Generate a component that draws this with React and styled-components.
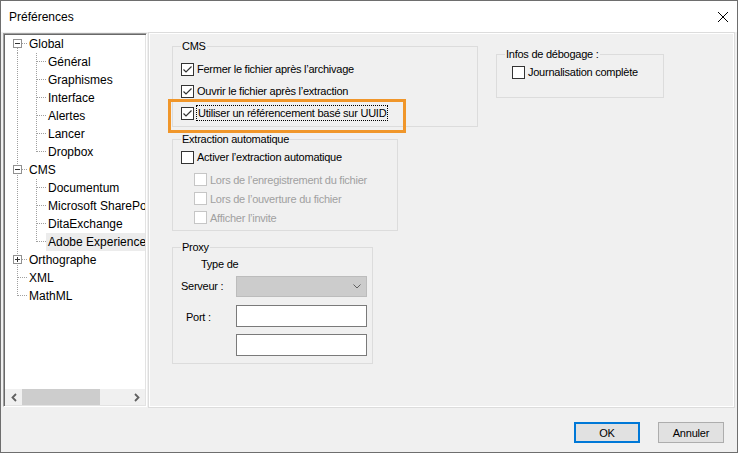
import styled, { createGlobalStyle } from 'styled-components';

const GlobalStyle = createGlobalStyle`
  html, body {
    margin: 0;
    padding: 0;
    background: #fff;
  }
  body {
    font-family: "Liberation Sans", Arial, sans-serif;
    color: #000;
  }
`;

const Window = styled.div`
  width: 738px;
  height: 453px;
  box-sizing: border-box;
  border: 1px solid #6e6e6e;
  display: flex;
  flex-direction: column;
  background: #f0f0f0;
`;

const TitleBar = styled.div`
  height: 31px;
  flex: none;
  background: #fff;
  display: flex;
  align-items: center;
  justify-content: space-between;
  padding: 0 9px 0 8px;
  font-size: 12px;
`;

const Body = styled.div`
  flex: 1;
  display: flex;
  flex-direction: column;
  padding: 1px 0 0 2px;
`;

const Main = styled.div`
  display: flex;
  gap: 2px;
  height: 374px;
`;

const Tree = styled.div`
  width: 144px;
  box-sizing: border-box;
  border-style: solid;
  border-width: 1px;
  border-color: #a0a0a0 #fff #fff #a0a0a0;
  box-shadow: inset 1px 1px 0 #696969, inset -1px -1px 0 #e3e3e3;
  background: #fff;
  display: flex;
  flex-direction: column;
  padding: 1px;
  overflow: hidden;
`;

const TreeList = styled.div`
  flex: 1;
  overflow: hidden;
`;

const TreeRow = styled.div`
  display: flex;
  align-items: center;
  height: 18px;
  white-space: nowrap;
  font-size: 12px;
`;

const TreeLabel = styled.span`
  padding: 2px 2px;
  line-height: 14px;
  flex: ${p => (p.$selected ? 1 : 'none')};
  background: ${p => (p.$selected ? '#ececec' : 'transparent')};
`;

const HScroll = styled.div`
  height: 16px;
  flex: none;
  display: flex;
  background: #f0f0f0;
`;

const ScrollArrow = styled.div`
  width: 17px;
  display: flex;
  align-items: center;
  justify-content: center;
`;

const Track = styled.div`
  flex: 1;
  display: flex;
`;

const Thumb = styled.div`
  width: 78px;
  background: #cdcdcd;
`;

const Panel = styled.div`
  width: 585px;
  box-sizing: border-box;
  border: 1px solid #fff;
  box-shadow: 0 0 0 1px #dcdcdc;
  padding: 6px 0 0 22px;
  display: flex;
  align-items: flex-start;
`;

const Column = styled.div`
  display: flex;
  flex-direction: column;
`;

const Group = styled.fieldset`
  margin: ${p => p.$mt || 0}px 0 0 ${p => p.$ml || 0}px;
  padding: ${p => p.$pt || 0}px 0 ${p => p.$pb || 0}px 8px;
  width: ${p => p.$w}px;
  box-sizing: border-box;
  min-width: 0;
  border: 1px solid #dcdcdc;
`;

const Legend = styled.legend`
  padding: 0 1px;
  font-size: 11px;
  line-height: 13px;
  letter-spacing: -0.25px;
`;

const CheckRow = styled.div`
  position: relative;
  display: flex;
  align-items: center;
  gap: 3px;
  height: ${p => p.$h || 22}px;
  margin-left: ${p => p.$indent || 0}px;
  margin-top: ${p => p.$mt || 0}px;
  font-size: 11px;
  letter-spacing: -0.25px;
  white-space: nowrap;
  color: ${p => (p.$disabled ? '#a0a0a0' : '#000')};
`;

const Box = styled.span`
  width: 13px;
  height: 13px;
  box-sizing: border-box;
  flex: none;
  border: 1px solid ${p => (p.$disabled ? '#c6c6c6' : '#333')};
  background: #fff;
  display: flex;
  align-items: center;
  justify-content: center;
`;

const FocusLabel = styled.span`
  border: 1px dotted #000;
  padding: 1px 1px;
  margin-left: -1px;
`;

const Highlight = styled.span`
  position: absolute;
  left: -13px;
  top: -3px;
  width: 238px;
  height: 34px;
  box-sizing: border-box;
  border: 3px solid #f0962a;
  pointer-events: none;
`;

const Text = styled.div`
  font-size: 11px;
  letter-spacing: -0.25px;
  line-height: 13px;
  margin: ${p => p.$mt || 0}px 0 0 ${p => p.$ml || 0}px;
`;

const FieldRow = styled.div`
  display: flex;
  align-items: ${p => (p.$top ? 'flex-start' : 'center')};
  margin-top: ${p => p.$mt || 0}px;
`;

const FieldLabel = styled.span`
  width: 55px;
  flex: none;
  box-sizing: border-box;
  padding: ${p => p.$pt || 0}px 0 0 ${p => p.$pl || 0}px;
  font-size: 11px;
  letter-spacing: -0.25px;
  line-height: 13px;
`;

const Combo = styled.div`
  width: 131px;
  height: 21px;
  box-sizing: border-box;
  border: 1px solid #bcbcbc;
  background: #cccccc;
  display: flex;
  align-items: center;
  justify-content: flex-end;
  padding-right: 5px;
`;

const Input = styled.div`
  width: 131px;
  height: 22px;
  box-sizing: border-box;
  border: 1px solid #7a7a7a;
  background: #fff;
`;

const Footer = styled.div`
  flex: 1;
  display: flex;
  justify-content: flex-end;
  align-items: flex-start;
  gap: 18px;
  padding: 15px 13px 0 0;
`;

const Button = styled.button`
  width: 66px;
  height: 21px;
  box-sizing: border-box;
  padding: 0;
  font-family: "Liberation Sans", Arial, sans-serif;
  font-size: 11px;
  letter-spacing: -0.2px;
  color: #000;
  background: #e1e1e1;
  border: 1px solid ${p => (p.$default ? '#0078d7' : '#adadad')};
  box-shadow: ${p => (p.$default ? 'inset 0 0 0 1px #0078d7' : 'none')};
`;

const treeItems = [
  { label: 'Global', level: 0, box: 'minus', first: true },
  { label: 'Général', level: 1 },
  { label: 'Graphismes', level: 1 },
  { label: 'Interface', level: 1 },
  { label: 'Alertes', level: 1 },
  { label: 'Lancer', level: 1 },
  { label: 'Dropbox', level: 1, lastChild: true },
  { label: 'CMS', level: 0, box: 'minus' },
  { label: 'Documentum', level: 1 },
  { label: 'Microsoft SharePoint', level: 1 },
  { label: 'DitaExchange', level: 1 },
  { label: 'Adobe Experience Manager', level: 1, lastChild: true, selected: true },
  { label: 'Orthographe', level: 0, box: 'plus' },
  { label: 'XML', level: 0 },
  { label: 'MathML', level: 0, last: true },
];

const dot = { stroke: '#a0a0a0', strokeWidth: 1, strokeDasharray: '1 1' };

const Connector = ({ level, box, first, last, lastChild }) => {
  const w = level === 0 ? 22 : 41;
  return (
    <svg width={w} height="18" style={{ flex: 'none' }}>
      <line x1="12.5" y1={first ? 9 : 0} x2="12.5" y2={last ? 9 : 18} {...dot} />
      {level === 0 && <line x1="13" y1="8.5" x2="22" y2="8.5" {...dot} />}
      {level === 1 && (
        <>
          <line x1="31.5" y1="0" x2="31.5" y2={lastChild ? 9 : 18} {...dot} />
          <line x1="32" y1="8.5" x2="41" y2="8.5" {...dot} />
        </>
      )}
      {box && (
        <g>
          <rect x="8.5" y="4.5" width="8" height="8" fill="#fff" stroke="#919191" />
          <line x1="10" y1="8.5" x2="15" y2="8.5" stroke="#333" />
          {box === 'plus' && <line x1="12.5" y1="6" x2="12.5" y2="11" stroke="#333" />}
        </g>
      )}
    </svg>
  );
};

const Chevron = ({ dir }) => (
  <svg width="6" height="9">
    <polyline
      points={dir === 'left' ? '5,1 1.5,4.5 5,8' : '1,1 4.5,4.5 1,8'}
      fill="none"
      stroke="#606060"
      strokeWidth="1.8"
    />
  </svg>
);

const Check = ({ checked, disabled, children, h, indent, mt, focus, highlight }) => (
  <CheckRow $h={h} $indent={indent} $mt={mt} $disabled={disabled}>
    <Box $disabled={disabled}>
      {checked && (
        <svg width="11" height="11">
          <polyline points="1.5,5.5 4,8 9.5,2.5" fill="none" stroke="#333" strokeWidth="1.2" />
        </svg>
      )}
    </Box>
    {focus ? <FocusLabel>{children}</FocusLabel> : <span>{children}</span>}
    {highlight && <Highlight />}
  </CheckRow>
);

export default function App() {
  return (
    <>
      <GlobalStyle />
      <Window>
        <TitleBar>
          <span>Préférences</span>
          <svg width="10" height="10">
            <line x1="0" y1="0" x2="10" y2="10" stroke="#000" strokeWidth="1" />
            <line x1="10" y1="0" x2="0" y2="10" stroke="#000" strokeWidth="1" />
          </svg>
        </TitleBar>
        <Body>
          <Main>
            <Tree>
              <TreeList>
                {treeItems.map(item => (
                  <TreeRow key={item.label}>
                    <Connector {...item} />
                    <TreeLabel $selected={item.selected}>{item.label}</TreeLabel>
                  </TreeRow>
                ))}
              </TreeList>
              <HScroll>
                <ScrollArrow>
                  <Chevron dir="left" />
                </ScrollArrow>
                <Track>
                  <Thumb />
                </Track>
                <ScrollArrow>
                  <Chevron dir="right" />
                </ScrollArrow>
              </HScroll>
            </Tree>
            <Panel>
              <Column>
                <Group $w={306} $pt={5} $pb={2}>
                  <Legend>CMS</Legend>
                  <Check checked>Fermer le fichier après l’archivage</Check>
                  <Check checked>Ouvrir le fichier après l’extraction</Check>
                  <Check checked focus highlight>
                    Utiliser un référencement basé sur UUID
                  </Check>
                </Group>
                <Group $w={226} $mt={6} $pb={3}>
                  <Legend>Extraction automatique</Legend>
                  <Check>Activer l’extraction automatique</Check>
                  <Check disabled h={19} indent={13} mt={2}>
                    Lors de l’enregistrement du fichier
                  </Check>
                  <Check disabled h={19} indent={13}>
                    Lors de l’ouverture du fichier
                  </Check>
                  <Check disabled h={19} indent={13}>
                    Afficher l’invite
                  </Check>
                </Group>
                <Group $w={201} $mt={10} $pb={7}>
                  <Legend>Proxy</Legend>
                  <Text $mt={4} $ml={20}>Type de</Text>
                  <FieldRow $mt={5}>
                    <FieldLabel>Serveur :</FieldLabel>
                    <Combo>
                      <svg width="8" height="5">
                        <polyline points="0.5,0.5 4,4 7.5,0.5" fill="none" stroke="#606060" strokeWidth="1" />
                      </svg>
                    </Combo>
                  </FieldRow>
                  <FieldRow $mt={8} $top>
                    <FieldLabel $pl={5} $pt={6}>Port :</FieldLabel>
                    <Input />
                  </FieldRow>
                  <FieldRow $mt={7}>
                    <FieldLabel />
                    <Input />
                  </FieldRow>
                </Group>
              </Column>
              <Group $w={168} $mt={8} $ml={18} $pb={14}>
                <Legend>Infos de débogage :</Legend>
                <Check indent={7}>Journalisation complète</Check>
              </Group>
            </Panel>
          </Main>
          <Footer>
            <Button $default>OK</Button>
            <Button>Annuler</Button>
          </Footer>
        </Body>
      </Window>
    </>
  );
}
